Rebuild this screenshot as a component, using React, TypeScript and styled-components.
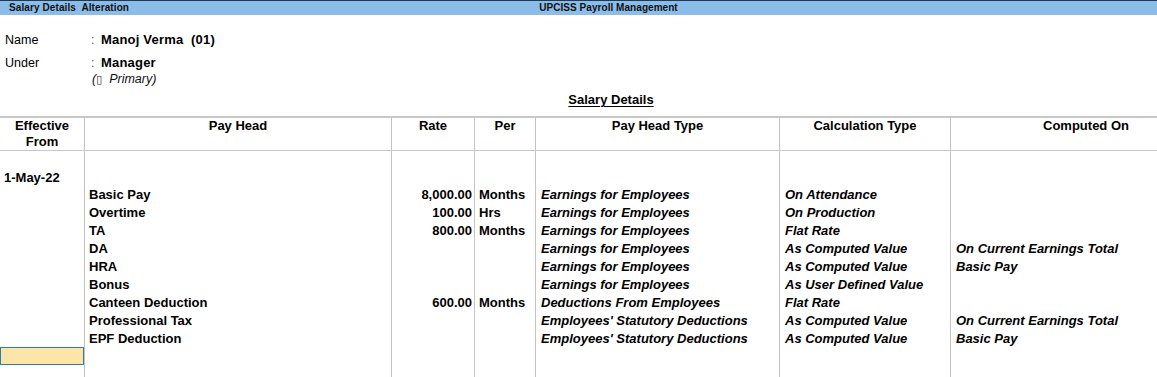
import React from "react";
import styled, { createGlobalStyle } from "styled-components";

const GlobalStyle = createGlobalStyle`
  html, body {
    margin: 0;
    padding: 0;
    background: #ffffff;
    overflow: hidden;
  }
  body {
    font-family: "Liberation Sans", Arial, sans-serif;
    color: #000;
  }
`;

const COLS = "85px 307px 83px 61px 244px 171px 271px";

const Screen = styled.div`
  width: 1222px;
  height: 100vh;
  min-height: 377px;
  display: flex;
  flex-direction: column;
`;

const TitleBar = styled.div`
  display: grid;
  grid-template-columns: 1fr;
  height: 14px;
  border-top: 1px solid #1d3a55;
  background: #8bbde8;
  font-size: 10px;
  font-weight: bold;
  line-height: 14px;
  color: #111;
  padding-right: 5px;
`;

const TitleLeft = styled.span`
  grid-area: 1 / 1;
  justify-self: start;
  padding-left: 9px;
  white-space: pre;
  letter-spacing: 0.1px;
`;

const TitleCenter = styled.span`
  grid-area: 1 / 1;
  justify-self: center;
  white-space: pre;
  letter-spacing: 0.05px;
`;

const Info = styled.div`
  padding: 16px 0 0 5px;
  display: flex;
  flex-direction: column;
`;

const InfoRow = styled.div<{ $gap?: number }>`
  display: grid;
  grid-template-columns: 86px 10px auto;
  margin-top: ${(p) => p.$gap ?? 0}px;
  line-height: ${(p) => (p.$gap ? 16 : 18)}px;
`;

const Label = styled.span`
  font-size: 12.5px;
`;

const Colon = styled.span`
  font-size: 12.5px;
  color: #555;
`;

const Value = styled.div`
  font-size: 13px;
  font-weight: bold;
  white-space: pre;
  letter-spacing: 0.2px;
`;

const Parent = styled.div`
  height: 16px;
  font-size: 12.5px;
  font-style: italic;
  margin-left: -9px;
  white-space: pre;
  color: #111;
`;

const Mark = styled.span`
  font-family: "DejaVu Sans", sans-serif;
  font-size: 11px;
  line-height: 0;
  font-style: italic;
  color: #222;
`;

const SectionTitle = styled.div`
  text-align: center;
  font-size: 13px;
  font-weight: bold;
  line-height: 16px;
  margin-top: 5px;
  margin-bottom: 8px;
  text-decoration: underline;
  text-underline-offset: 2px;
`;

const Table = styled.div`
  flex: 1;
  display: flex;
  flex-direction: column;
  border-top: 2px solid #c8c8c8;
`;

const Row = styled.div<{ $height?: number; $fill?: boolean }>`
  display: grid;
  grid-template-columns: ${COLS};
  height: ${(p) => (p.$height ? `${p.$height}px` : "auto")};
  flex: ${(p) => (p.$fill ? 1 : "none")};
`;

const HeadRow = styled(Row)`
  border-bottom: 1px solid #c8c8c8;
`;

const Cell = styled.div<{
  $align?: "left" | "right" | "center";
  $italic?: boolean;
  $padTop?: number;
  $lh?: number;
}>`
  box-sizing: border-box;
  border-right: 1px solid #c4c4c4;
  padding: ${(p) => p.$padTop ?? 1}px ${(p) => (p.$align === "right" ? 2 : 4)}px 0
    ${(p) => (p.$italic ? 5 : 4)}px;
  text-align: ${(p) => p.$align ?? "left"};
  font-style: ${(p) => (p.$italic ? "italic" : "normal")};
  font-size: 13px;
  font-weight: bold;
  line-height: ${(p) => p.$lh ?? 17}px;
  white-space: nowrap;
  overflow: hidden;
`;

const HeadCell = styled.div`
  box-sizing: border-box;
  border-right: 1px solid #c4c4c4;
  padding: 0 4px;
  height: 32px;
  text-align: center;
  font-size: 13px;
  font-weight: bold;
  line-height: 16px;
`;

const InputCell = styled.div`
  box-sizing: border-box;
  border-right: 1px solid #c4c4c4;
`;

const InputBox = styled.div`
  box-sizing: border-box;
  height: 18px;
  background: #fde5aa;
  border: 1px solid #2b7ea4;
`;

type Item = {
  head: string;
  rate?: string;
  per?: string;
  type: string;
  calc: string;
  on?: string;
};

const items: Item[] = [
  { head: "Basic Pay", rate: "8,000.00", per: "Months", type: "Earnings for Employees", calc: "On Attendance" },
  { head: "Overtime", rate: "100.00", per: "Hrs", type: "Earnings for Employees", calc: "On Production" },
  { head: "TA", rate: "800.00", per: "Months", type: "Earnings for Employees", calc: "Flat Rate" },
  { head: "DA", type: "Earnings for Employees", calc: "As Computed Value", on: "On Current Earnings Total" },
  { head: "HRA", type: "Earnings for Employees", calc: "As Computed Value", on: "Basic Pay" },
  { head: "Bonus", type: "Earnings for Employees", calc: "As User Defined Value" },
  { head: "Canteen Deduction", rate: "600.00", per: "Months", type: "Deductions From Employees", calc: "Flat Rate" },
  { head: "Professional Tax", type: "Employees' Statutory Deductions", calc: "As Computed Value", on: "On Current Earnings Total" },
  { head: "EPF Deduction", type: "Employees' Statutory Deductions", calc: "As Computed Value", on: "Basic Pay" },
];

const headers = [
  "Effective From",
  "Pay Head",
  "Rate",
  "Per",
  "Pay Head Type",
  "Calculation Type",
  "Computed On",
];

const EmptyCells = ({ count }: { count: number }) => (
  <>
    {Array.from({ length: count }).map((_, i) => (
      <Cell key={i} />
    ))}
  </>
);

export default function App() {
  return (
    <>
      <GlobalStyle />
      <Screen>
        <TitleBar>
          <TitleLeft>Salary Details  Alteration</TitleLeft>
          <TitleCenter>UPCISS Payroll Management</TitleCenter>
        </TitleBar>

        <Info>
          <InfoRow>
            <Label>Name</Label>
            <Colon>:</Colon>
            <Value>Manoj Verma  (01)</Value>
          </InfoRow>
          <InfoRow $gap={6}>
            <Label>Under</Label>
            <Colon>:</Colon>
            <div>
              <Value>Manager</Value>
              <Parent>
                (<Mark>▯</Mark>  Primary)
              </Parent>
            </div>
          </InfoRow>
        </Info>

        <SectionTitle>Salary Details</SectionTitle>

        <Table>
          <HeadRow>
            {headers.map((h) => (
              <HeadCell key={h}>{h}</HeadCell>
            ))}
          </HeadRow>

          <Row $height={34}>
            <Cell $padTop={19} $lh={15}>1-May-22</Cell>
            <EmptyCells count={6} />
          </Row>

          {items.map((it) => (
            <Row key={it.head} $height={18}>
              <Cell />
              <Cell>{it.head}</Cell>
              <Cell $align="right">{it.rate ?? ""}</Cell>
              <Cell>{it.per ?? ""}</Cell>
              <Cell $italic>{it.type}</Cell>
              <Cell $italic>{it.calc}</Cell>
              <Cell $italic>{it.on ?? ""}</Cell>
            </Row>
          ))}

          <Row $height={18}>
            <InputCell>
              <InputBox />
            </InputCell>
            <EmptyCells count={6} />
          </Row>

          <Row $fill>
            <EmptyCells count={7} />
          </Row>
        </Table>
      </Screen>
    </>
  );
}
